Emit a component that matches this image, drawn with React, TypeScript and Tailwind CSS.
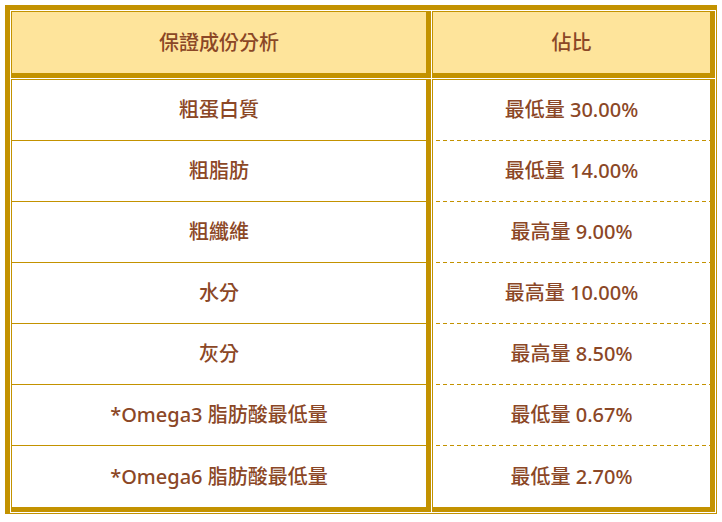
const rows = [
  { name: '粗蛋白質', value: '最低量 30.00%' },
  { name: '粗脂肪', value: '最低量 14.00%' },
  { name: '粗纖維', value: '最高量 9.00%' },
  { name: '水分', value: '最高量 10.00%' },
  { name: '灰分', value: '最高量 8.50%' },
  { name: '*Omega3 脂肪酸最低量', value: '最低量 0.67%' },
  { name: '*Omega6 脂肪酸最低量', value: '最低量 2.70%' },
];

const cell = 'border-t border-l border-r-[5px] border-b-[5px] border-[#c39200]';

export default function App() {
  return (
    <div className="min-h-screen bg-white p-[5px] font-['Noto_Sans','Noto_Sans_CJK_TC',sans-serif] text-[20px] font-medium text-[#8b4726]">
      <div className="w-[712px] border-t-[5px] border-l-[5px] border-r border-b border-[#c39200] bg-white p-px flex flex-col gap-px">
        <div className="grid grid-cols-[420px_283px] gap-px">
          <div className={`${cell} h-[67px] bg-[#fee49b] flex items-center justify-center`}>保證成份分析</div>
          <div className={`${cell} h-[67px] bg-[#fee49b] flex items-center justify-center`}>佔比</div>
        </div>
        <div className="grid grid-cols-[420px_283px] gap-px">
          <div className={`${cell} flex flex-col`}>
            {rows.map((r, i) => (
              <div
                key={i}
                className={`h-[61px] flex items-center justify-center ${i < rows.length - 1 ? 'border-b border-[#c39200]' : ''}`}
              >
                {r.name}
              </div>
            ))}
          </div>
          <div className={`${cell} flex flex-col`}>
            {rows.map((r, i) => (
              <div key={i} className="h-[61px] flex flex-col">
                <div className="flex-1 flex items-center justify-center">{r.value}</div>
                {i < rows.length - 1 && (
                  <div className="h-px ml-[3px] bg-[repeating-linear-gradient(to_right,#c39200_0_4px,transparent_4px_7px)]" />
                )}
              </div>
            ))}
          </div>
        </div>
      </div>
    </div>
  );
}
